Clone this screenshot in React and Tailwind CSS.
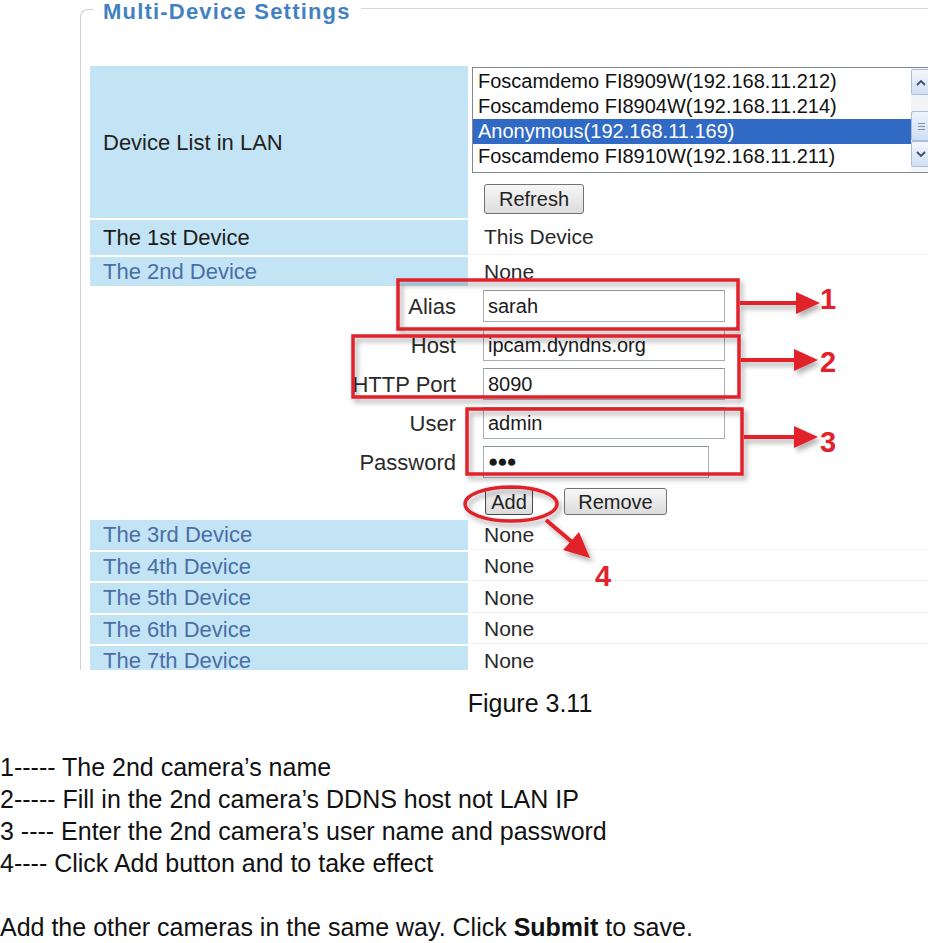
import React from "react";

const lanDevices = [
  { label: "Foscamdemo FI8909W(192.168.11.212)" },
  { label: "Foscamdemo FI8904W(192.168.11.214)" },
  { label: "Anonymous(192.168.11.169)", selected: true },
  { label: "Foscamdemo FI8910W(192.168.11.211)" },
];

const laterDevices = ["The 3rd Device", "The 4th Device", "The 5th Device", "The 6th Device", "The 7th Device"];

const formFields = [
  { label: "Alias", value: "sarah" },
  { label: "Host", value: "ipcam.dyndns.org" },
  { label: "HTTP Port", value: "8090" },
  { label: "User", value: "admin" },
  { label: "Password", value: "\u25CF\u25CF\u25CF", narrow: true },
];

const OldButton = ({ children, className = "" }) => (
  <button
    type="button"
    className={`rounded-[3px] border border-[#6f7378] bg-linear-to-b from-[#f7f7f7] to-[#dcdcdc] text-[20px] leading-none text-[#222] ${className}`}
  >
    {children}
  </button>
);

const Chevron = ({ up }) => (
  <svg width="10" height="7" viewBox="0 0 10 7">
    <path
      d={up ? "M1 6 L5 2 L9 6" : "M1 1 L5 5 L9 1"}
      fill="none"
      stroke="#3b4f72"
      strokeWidth="1.8"
    />
  </svg>
);

const Annotations = () => (
  <svg className="pointer-events-none absolute inset-0" width="928" height="670">
    <defs>
      <filter id="shade" x="-20%" y="-20%" width="140%" height="160%">
        <feDropShadow dx="3" dy="4" stdDeviation="2.5" floodColor="#000" floodOpacity="0.3" />
      </filter>
    </defs>
    <g filter="url(#shade)">
      <g stroke="#e1222c" strokeWidth="3.5" fill="none">
        <rect x="398" y="280" width="340" height="49" />
        <rect x="353" y="336" width="386" height="61" />
        <rect x="467" y="409" width="275" height="65" />
        <ellipse cx="511" cy="504" rx="46" ry="17" />
      </g>
      <g stroke="#e1222c" strokeWidth="4">
        <line x1="740" y1="303" x2="800" y2="303" />
        <line x1="741" y1="360" x2="798" y2="360" />
        <line x1="744" y1="437" x2="798" y2="437" />
        <line x1="546" y1="520" x2="572" y2="542" />
      </g>
      <g fill="#e1222c">
        <polygon points="796,292 820,303 796,314" />
        <polygon points="794,349 818,360 794,371" />
        <polygon points="794,426 818,437 794,448" />
        <polygon points="563,550 590,558 579,532" />
      </g>
    </g>
    <g fill="#e1222c" fontSize="29" fontWeight="bold" fontFamily="'Liberation Sans', Arial, sans-serif">
      <text x="820" y="309">1</text>
      <text x="820" y="372">2</text>
      <text x="820" y="452">3</text>
      <text x="595" y="586">4</text>
    </g>
  </svg>
);

const Screenshot = () => (
  <div className="relative h-[670px] overflow-hidden pl-[80px]">
    <div className="flex h-[30px] items-start">
      <div className="mt-[9px] h-[21px] w-[13px] shrink-0 rounded-tl-[8px] border-l border-t border-[#cfcfcf]" />
      <div className="shrink-0 px-[10px] text-[22px] font-bold leading-[24px] tracking-[1.2px] text-[#4281c2]">
        Multi-Device Settings
      </div>
      <div className="mt-[8px] flex-1 border-t border-[#d6d6d6]" />
    </div>

    <div className="border-l border-[#cfcfcf] pl-[9px] pt-[36px]">
      <div className="flex flex-col gap-[2px]">
        <div className="flex h-[152px] gap-[2px]">
          <div className="flex w-[378px] shrink-0 items-center bg-[#c3e4f5] pl-[13px] text-[22px] text-[#222]">
            Device List in LAN
          </div>
          <div className="min-w-0 flex-1 pl-[2px] pt-[1px]">
            <div className="flex h-[106px] w-[460px] border border-[#828790] bg-white">
              <div className="flex-1 pt-[1px]">
                {lanDevices.map((d) => (
                  <div
                    key={d.label}
                    className={`h-[25px] px-[5px] text-[20px] leading-[25px] ${
                      d.selected ? "bg-[#316ac5] text-white" : "text-[#111]"
                    }`}
                  >
                    {d.label}
                  </div>
                ))}
              </div>
              <div className="flex w-[20px] flex-col bg-[#f2f4f7] py-[1px]">
                <div className="flex h-[26px] items-center justify-center rounded-[2px] border border-[#a8bdd6] bg-linear-to-b from-[#f3f7fc] to-[#cfdff2]">
                  <Chevron up />
                </div>
                <div className="h-[16px]" />
                <div className="flex h-[30px] flex-col items-center justify-center gap-[2px] rounded-[2px] border border-[#a8bdd6] bg-linear-to-b from-[#eef4fb] to-[#cfdff2]">
                  <div className="h-px w-[7px] bg-[#7f94b4]" />
                  <div className="h-px w-[7px] bg-[#7f94b4]" />
                  <div className="h-px w-[7px] bg-[#7f94b4]" />
                </div>
                <div className="flex h-[26px] items-center justify-center rounded-[2px] border border-[#a8bdd6] bg-linear-to-b from-[#f3f7fc] to-[#cfdff2]">
                  <Chevron />
                </div>
              </div>
            </div>
            <OldButton className="ml-[12px] mt-[11px] h-[30px] w-[100px]">Refresh</OldButton>
          </div>
        </div>

        <div className="flex h-[35px] gap-[2px]">
          <div className="flex w-[378px] shrink-0 items-center bg-[#c3e4f5] pl-[13px] text-[22px] text-[#1c1c1c]">
            The 1st Device
          </div>
          <div className="flex flex-1 items-center border-b border-[#f1f1f1] pl-[14px] text-[21px] text-[#2a2a2a]">
            This Device
          </div>
        </div>

        <div className="flex h-[29px] gap-[2px]">
          <div className="flex w-[378px] shrink-0 items-center bg-[#c3e4f5] pl-[13px] text-[22px] text-[#4a6ea6]">
            The 2nd Device
          </div>
          <div className="flex flex-1 items-center pl-[14px] text-[21px] text-[#2a2a2a]">None</div>
        </div>

        <div className="flex h-[230px] flex-col pt-[2px]">
          <div className="flex flex-col gap-[7px]">
            {formFields.map((f) => (
              <div key={f.label} className="flex h-[32px] items-center">
                <div className="w-[366px] shrink-0 text-right text-[22px] text-[#2a2a2a]">{f.label}</div>
                <div className="pl-[27px]">
                  <div
                    className={`flex h-[32px] items-center border border-[#a9afb8] border-t-[#8e949c] bg-white px-[4px] text-[#1a1a1a] ${
                      f.narrow ? "w-[226px] text-[17px] tracking-[-1px]" : "w-[242px] text-[20px]"
                    }`}
                  >
                    {f.value}
                  </div>
                </div>
              </div>
            ))}
          </div>
          <div className="mt-[10px] flex gap-[31px] pl-[395px]">
            <OldButton className="h-[27px] w-[48px] border-[#434a52]">Add</OldButton>
            <OldButton className="h-[27px] w-[103px] border-[#5d7f9f]">Remove</OldButton>
          </div>
        </div>

        {laterDevices.map((name) => (
          <div key={name} className="flex h-[29.5px] gap-[2px]">
            <div className="flex w-[378px] shrink-0 items-center bg-[#c3e4f5] pl-[13px] text-[22px] text-[#4a6ea6]">
              {name}
            </div>
            <div className="flex flex-1 items-center border-b border-[#f3f3f3] pl-[14px] text-[21px] text-[#2a2a2a]">
              None
            </div>
          </div>
        ))}
      </div>
    </div>

    <Annotations />
  </div>
);

export default function App() {
  return (
    <div className="h-[943px] w-[928px] overflow-hidden bg-white font-['Liberation_Sans',Arial,sans-serif]">
      <Screenshot />
      <div className="mt-[17px] text-[25px] leading-[32px] text-[#111]">
        <p className="pl-[132px] text-center">Figure 3.11</p>
        <p className="h-[32px]" />
        <p>1----- The 2nd camera’s name</p>
        <p>2----- Fill in the 2nd camera’s DDNS host not LAN IP</p>
        <p>3 ---- Enter the 2nd camera’s user name and password</p>
        <p>4---- Click Add button and to take effect</p>
        <p className="h-[32px]" />
        <p>
          Add the other cameras in the same way. Click <span className="font-bold">Submit</span> to save.
        </p>
      </div>
    </div>
  );
}
